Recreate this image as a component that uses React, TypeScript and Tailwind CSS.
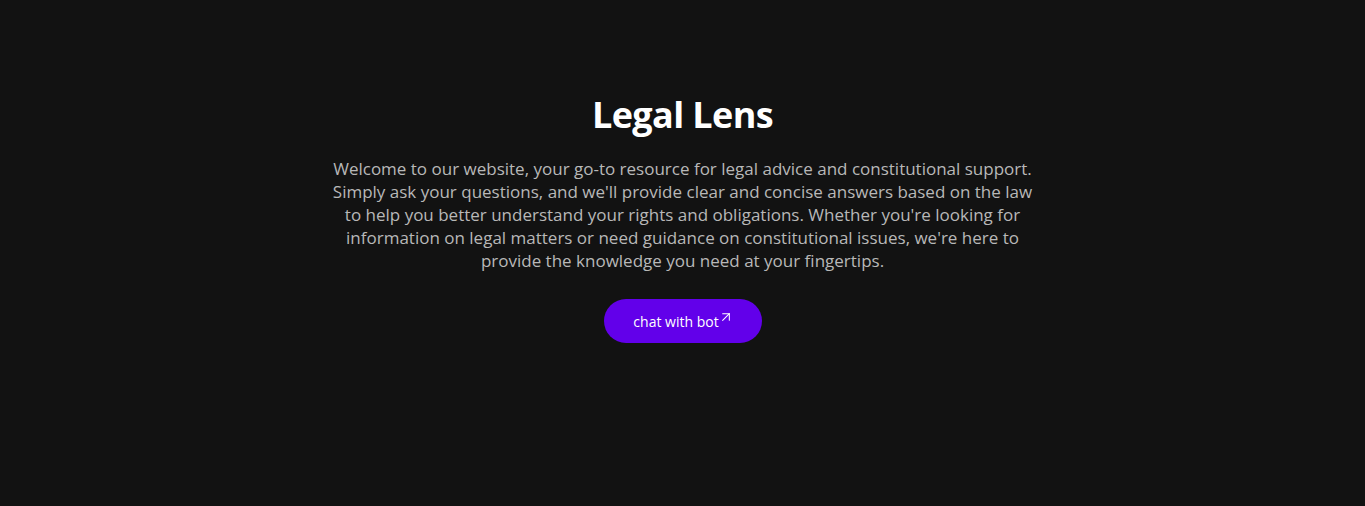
import { ArrowUpRight } from "lucide-react";

export default function App() {
  return (
    <div className="min-h-[506px] bg-[#121212] flex flex-col items-center pt-[95px] px-4" style={{ fontFamily: "'Open Sans', 'Noto Sans', sans-serif" }}>
      <h1 className="text-[36px] leading-[40px] font-bold text-white tracking-[-0.6px]">Legal Lens</h1>
      <p className="mt-[22px] max-w-[720px] text-center text-[17px] leading-[23px] text-[#b8b8b8]">
        Welcome to our website, your go-to resource for legal advice and constitutional support. Simply ask your questions, and we'll provide clear and concise answers based on the law to help you better understand your rights and obligations. Whether you're looking for information on legal matters or need guidance on constitutional issues, we're here to provide the knowledge you need at your fingertips.
      </p>
      <button className="mt-[27px] h-[44px] w-[158px] rounded-full bg-[#6200ea] text-white text-[14px] flex items-center justify-center pl-[2px]">
        chat with bot
        <ArrowUpRight className="w-[16px] h-[16px] -mt-[8px] -ml-[1px]" strokeWidth={1.6} />
      </button>
    </div>
  );
}
